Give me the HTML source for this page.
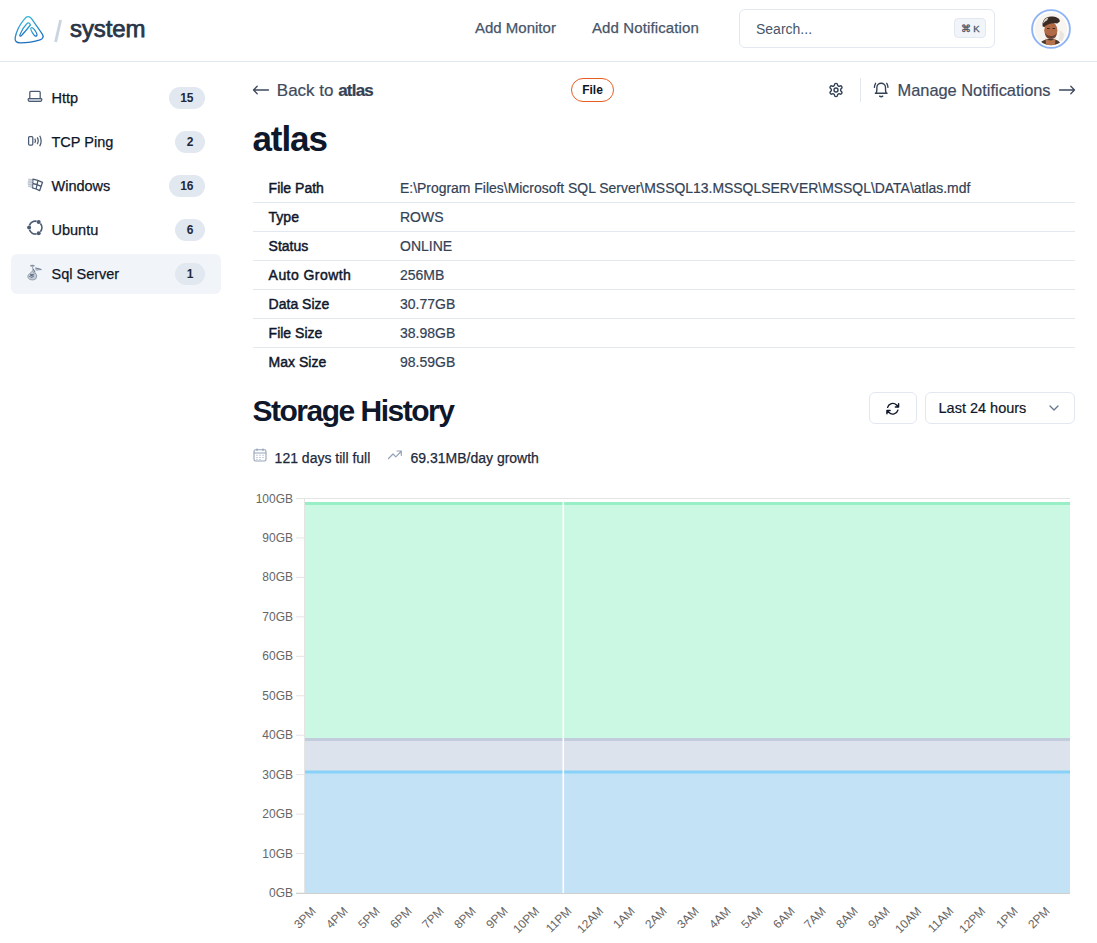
<!DOCTYPE html>
<html><head><meta charset="utf-8">
<style>
*{box-sizing:border-box;margin:0;padding:0}
html,body{width:1097px;height:943px;overflow:hidden;background:#fff;font-family:"Liberation Sans",sans-serif;color:#0f172a}
.abs{position:absolute}
.t{position:absolute;line-height:1;white-space:nowrap}
#hdr{position:absolute;left:0;top:0;width:1097px;height:62px;border-bottom:1px solid #e2e8f0}
.nav{font-size:15px;color:#475569;top:20.4px;-webkit-text-stroke:0.25px #475569}
#search{position:absolute;left:739px;top:9px;width:256px;height:39px;border:1px solid #e2e8f0;border-radius:6px}
#search .ph{left:16px;top:11.7px;font-size:14px;color:#475569}
#search .kbd{position:absolute;left:214px;top:8px;width:32px;height:19.5px;padding-top:0.7px;border:1px solid #e2e8f0;background:#f1f5f9;border-radius:4px;font-size:9.5px;-webkit-text-stroke:0.3px #475569;color:#475569;text-align:center;line-height:18px}
.si{position:absolute;left:11px;width:210px;height:40px;border-radius:6px}
.si.sel{background:#f1f5f9}
.si .lbl{left:40.5px;top:13.1px;font-size:14.5px;color:#0f172a;-webkit-text-stroke:0.25px #0f172a}
.si .bdg{position:absolute;right:16px;top:9px;height:22px;min-width:28px;padding:0 11.5px;border-radius:11px;background:#e2e8f0;font-size:12px;font-weight:bold;color:#1e293b;text-align:center;line-height:22px}
.si svg{position:absolute;left:15px;top:12px}
.tl{font-size:14px;color:#0f172a;left:268.6px;-webkit-text-stroke:0.45px #0f172a}
.tv{font-size:14px;color:#334155;left:400px;-webkit-text-stroke:0.2px #334155}
.rowline{position:absolute;left:253px;width:822px;height:1px;background:#e2e8f0}
.yl{position:absolute;right:804px;font-size:12px;line-height:12px;color:#666;white-space:nowrap;text-align:right}
.xl{position:absolute;font-size:12px;line-height:12px;color:#666;white-space:nowrap;transform-origin:100% 50%;transform:rotate(-45deg)}
</style></head>
<body>
<div id="hdr">
  <svg class="abs" style="left:13px;top:15px" width="32" height="30" viewBox="0 0 32 30">
    <defs><linearGradient id="lg" x1="0" y1="0" x2="0.3" y2="1"><stop offset="0" stop-color="#38bdd8"/><stop offset="1" stop-color="#1d6fc0"/></linearGradient></defs>
    <path d="M11.8 3.6 C13.6 0.9 16.6 0.9 18.5 3.6 L29 18.6 C31 21.4 30.2 23.8 27 24.8 C21 26.8 14 27.8 7.2 27.8 C3.4 27.8 1.6 25.9 2.2 22.6 C3.4 16 6.8 9.4 11.8 3.6 Z" fill="none" stroke="url(#lg)" stroke-width="1.3"/>
    <path d="M8.4 20.6 C7.6 21.6 6.5 21.1 6.9 19.9 C8.4 15.6 11.2 11.2 13.8 8.7 C14.9 7.6 16.2 7.8 16.9 9 L17.4 10 C15 13 11.8 17 8.4 20.6 Z" fill="none" stroke="url(#lg)" stroke-width="1.25"/>
    <ellipse cx="20.9" cy="16.9" rx="1.7" ry="4.9" transform="rotate(-32 20.9 16.9)" fill="none" stroke="url(#lg)" stroke-width="1.25"/>
  </svg>
  <svg class="abs" style="left:50px;top:16px" width="16" height="30" viewBox="0 0 16 30"><line x1="10.6" y1="4" x2="5.6" y2="26" stroke="#cbd5e1" stroke-width="2.9" stroke-linecap="butt"/></svg>
  <div class="t" style="left:70px;top:17.4px;font-size:24px;color:#283548;letter-spacing:-0.1px;-webkit-text-stroke:0.75px #283548">system</div>
  <div class="t nav" style="left:475px">Add Monitor</div>
  <div class="t nav" style="left:592px;letter-spacing:0.12px">Add Notification</div>
  <div id="search"><div class="t ph">Search...</div><div class="kbd">&#8984; K</div></div>
  <svg class="abs" style="left:1030px;top:8px" width="42" height="42" viewBox="0 0 42 42">
    <defs><clipPath id="av"><circle cx="21" cy="21" r="16.2"/></clipPath></defs>
    <circle cx="21" cy="21" r="18.9" fill="#fff" stroke="#8fb4f6" stroke-width="1.9"/>
    <g clip-path="url(#av)">
      <rect x="0" y="0" width="42" height="42" fill="#f8f5f1"/>
      <path d="M30 22 L34 26 L33 34 L29 32 Z" fill="#e9e4dc"/>
      <path d="M8.5 38 C10.5 33 14.5 31 20 31 C25.5 31 29.5 32.5 31.5 37 L31.5 42 L8.5 42 Z" fill="#4a3a32"/>
      <path d="M15.5 30.5 Q20.5 34.5 25.5 30.5 L25 37 L16 37 Z" fill="#b5744f"/>
      <ellipse cx="20.8" cy="22.3" rx="6.6" ry="8.2" fill="#b06a45"/>
      <path d="M14.8 25 C15.5 29.5 18 31.2 21 31.2 C24 31.2 26.5 29.5 27 25 C25 27.5 23 28 21 28 C18.5 28 16.5 27 14.8 25 Z" fill="#5e3a2a" opacity="0.85"/>
      <path d="M17 20.5 h2.6 M22.5 20.5 h2.6" stroke="#3a2620" stroke-width="1"/>
      <path d="M12.6 18.5 C12 12 15.5 8.6 21 8.6 C26.5 8.6 30.2 10.6 29.8 13.6 L27.2 15.6 C23 14.6 17.5 15.2 14.6 19 Z" fill="#3b2b25"/>
      <path d="M13.2 14.5 C13.8 11.5 16 10 18.5 9.6 L17 12.5 C15.5 13 14.2 14 13.6 15.5 Z" fill="#d9cfc4"/>
    </g>
  </svg>
</div>

<!-- sidebar -->
<div class="si" style="top:78px">
  <svg width="16" height="16" viewBox="0 0 16 16" style="left:16px;top:12px"><path d="M2.8 8.6 V2.4 Q2.8 1.4 3.8 1.4 H12.2 Q13.2 1.4 13.2 2.4 V8.6" fill="none" stroke="#4b5b73" stroke-width="1.25"/><path d="M1.6 8.6 H14.4 Q15 8.8 14.8 9.8 Q14.5 11.3 13.4 11.3 H2.6 Q1.5 11.3 1.2 9.8 Q1 8.8 1.6 8.6 Z" fill="#dde3ec" stroke="#4b5b73" stroke-width="1.25"/></svg>
  <div class="t lbl">Http</div><div class="bdg">15</div></div>
<div class="si" style="top:122px">
  <svg width="16" height="16" viewBox="0 0 16 16" style="left:16px;top:11.5px"><rect x="1.6" y="2.5" width="4.2" height="8.6" rx="1" fill="none" stroke="#4b5b73" stroke-width="1.25"/><path d="M7.8 4.6 Q9.2 6.8 7.8 9" fill="none" stroke="#4b5b73" stroke-width="1.25"/><path d="M10.2 3.4 Q12.3 6.8 10.2 10.2" fill="none" stroke="#4b5b73" stroke-width="1.25"/><path d="M12.7 1.8 Q15.6 6.8 12.7 12.2" fill="none" stroke="#4b5b73" stroke-width="1.25"/></svg>
  <div class="t lbl">TCP Ping</div><div class="bdg">2</div></div>
<div class="si" style="top:166px">
  <svg width="18" height="17" viewBox="0 0 18 17" style="left:15px;top:10px"><path d="M6.9 3.1 Q12 4 16.5 6.3 L13.7 14.6 Q10 12.6 6.5 11.8 Z" fill="none" stroke="#4b5b73" stroke-width="1.3" stroke-linejoin="round"/><path d="M11.9 4.6 L10.1 13.2 M6.8 7.5 Q11 8.3 15.2 10.4" stroke="#4b5b73" stroke-width="1.3" fill="none"/><path d="M2.5 2.5 L7 3.3 L6.5 11.8 L2.2 11 Q1 7 2.5 2.5 Z" fill="#8c98ab" opacity="0.55"/><path d="M2 4.5 L6.8 5.4 M1.7 7 L6.7 7.8 M1.8 9.4 L6.6 10.2" stroke="#fff" stroke-width="0.6" opacity="0.7"/></svg>
  <div class="t lbl">Windows</div><div class="bdg">16</div></div>
<div class="si" style="top:210px">
  <svg width="17" height="17" viewBox="0 0 17 17" style="left:15.5px;top:10px"><path d="M2.49 5.41 A6.4 6.4 0 0 1 9.61 1.30 M13.40 3.49 A6.4 6.4 0 0 1 13.40 11.71 M9.61 13.90 A6.4 6.4 0 0 1 2.49 9.79" fill="none" stroke="#4b5b73" stroke-width="1.7"/><circle cx="11.70" cy="2.06" r="2" fill="#4b5b73"/><circle cx="2.10" cy="7.60" r="2" fill="#4b5b73"/><circle cx="11.70" cy="13.14" r="2" fill="#4b5b73"/></svg>
  <div class="t lbl">Ubuntu</div><div class="bdg">6</div></div>
<div class="si sel" style="top:254px">
  <svg width="16" height="17" viewBox="0 0 16 17" style="left:16px;top:10px"><ellipse cx="5.4" cy="1.8" rx="2.4" ry="1" fill="#6b7a90" opacity="0.8"/><path d="M8 3.6 Q12 3.8 15 5.6 Q12.5 7 8.6 6.6 Z" fill="#9aa6b8" opacity="0.75"/><path d="M8.5 4 L14.5 5.6" stroke="#5f6e85" stroke-width="0.8"/><path d="M5.4 3 L6.2 5 Q5.5 7.2 6.6 8.6 Q9.5 9 9.8 12 Q9.8 15.6 6 16 Q2.2 16.2 0.9 13.6 Q0.3 11.2 2.6 9.6 Q4.6 8.4 5.5 6.8" fill="#b4bdcb" opacity="0.75" stroke="#5f6e85" stroke-width="0.8"/><path d="M3 10.8 Q5.5 10 6.5 11.8 Q6 13.6 3.8 13.4 M2.4 12.6 L6.8 10.2 M6.4 5.2 L8.2 8.4" fill="none" stroke="#4b5b73" stroke-width="0.9"/></svg>
  <div class="t lbl">Sql Server</div><div class="bdg">1</div></div>

<!-- top bar main -->
<svg class="abs" style="left:252px;top:82px" width="18" height="16" viewBox="0 0 18 16"><path d="M16.5 8 H1.5 M5.2 4.3 L1.5 8 L5.2 11.7" fill="none" stroke="#3e4a5d" stroke-width="1.3" stroke-linecap="round" stroke-linejoin="round"/></svg>
<div class="t" style="left:276.8px;top:81.5px;font-size:17px;color:#3e4a5d;-webkit-text-stroke:0.2px #3e4a5d">Back to <b style="color:#334155;letter-spacing:-0.8px">atlas</b></div>

<div class="abs" style="left:571px;top:78px;width:43px;height:24px;border:1.4px solid #e95c20;border-radius:12px"></div>
<div class="t" style="left:582.2px;top:83.7px;font-size:12px;font-weight:bold;color:#0f172a">File</div>

<svg class="abs" style="left:828px;top:82px" width="16" height="16" viewBox="0 0 24 24"><path d="M12.22 2h-.44a2 2 0 0 0-2 2v.18a2 2 0 0 1-1 1.73l-.43.25a2 2 0 0 1-2 0l-.15-.08a2 2 0 0 0-2.73.73l-.22.38a2 2 0 0 0 .73 2.730l.15.1a2 2 0 0 1 1 1.72v.51a2 2 0 0 1-1 1.74l-.15.09a2 2 0 0 0-.73 2.73l.22.38a2 2 0 0 0 2.73.73l.15-.08a2 2 0 0 1 2 0l.43.25a2 2 0 0 1 1 1.73V20a2 2 0 0 0 2 2h.44a2 2 0 0 0 2-2v-.18a2 2 0 0 1 1-1.73l.43-.25a2 2 0 0 1 2 0l.15.08a2 2 0 0 0 2.73-.73l.22-.39a2 2 0 0 0-.73-2.73l-.15-.08a2 2 0 0 1-1-1.74v-.5a2 2 0 0 1 1-1.74l.15-.09a2 2 0 0 0 .73-2.73l-.22-.38a2 2 0 0 0-2.73-.73l-.15.08a2 2 0 0 1-2 0l-.43-.25a2 2 0 0 1-1-1.73V4a2 2 0 0 0-2-2z" fill="none" stroke="#334155" stroke-width="2.1"/><circle cx="12" cy="12" r="3" fill="none" stroke="#334155" stroke-width="2.1"/></svg>
<div class="abs" style="left:860px;top:78px;width:1px;height:24px;background:#e2e8f0"></div>
<svg class="abs" style="left:873px;top:82px" width="16.5" height="16.5" viewBox="0 0 24 24"><path d="M4.6 16.4 Q5.6 14 5.6 11 V8.2 A6.3 6.3 0 0 1 18.2 8.2 V11 Q18.2 14 19.2 16.4" fill="none" stroke="#334155" stroke-width="2" stroke-linejoin="round"/><path d="M3.4 16.4 H20.4" stroke="#334155" stroke-width="2.1" stroke-linecap="round"/><path d="M9.6 20.6 Q11.9 22.2 14.2 20.6" fill="none" stroke="#334155" stroke-width="2" stroke-linecap="round"/><path d="M3.8 1.9 Q2.1 4.6 2 7.8 M20 1.9 Q21.7 4.6 21.8 7.8" fill="none" stroke="#334155" stroke-width="1.9" stroke-linecap="round"/></svg>
<div class="t" style="left:897.5px;top:82.2px;font-size:16.4px;color:#3e4a5d;-webkit-text-stroke:0.2px #3e4a5d">Manage Notifications</div>
<svg class="abs" style="left:1058px;top:82px" width="18" height="16" viewBox="0 0 18 16"><path d="M1.5 8 H16.5 M12.8 4.3 L16.5 8 L12.8 11.7" fill="none" stroke="#3e4a5d" stroke-width="1.3" stroke-linecap="round" stroke-linejoin="round"/></svg>

<div class="t" style="left:252.5px;top:121.2px;font-size:35px;font-weight:bold;color:#0f172a;letter-spacing:-1.1px">atlas</div>

<!-- table -->
<div class="t tl" style="top:180.85px">File Path</div><div class="t tv" style="top:181.5px;font-size:13.95px">E:\Program Files\Microsoft SQL Server\MSSQL13.MSSQLSERVER\MSSQL\DATA\atlas.mdf</div>
<div class="rowline" style="top:202px"></div>
<div class="t tl" style="top:209.85px">Type</div><div class="t tv" style="top:209.8px">ROWS</div>
<div class="rowline" style="top:231px"></div>
<div class="t tl" style="top:238.85px">Status</div><div class="t tv" style="top:238.8px">ONLINE</div>
<div class="rowline" style="top:260px"></div>
<div class="t tl" style="top:267.85px;letter-spacing:0.45px">Auto Growth</div><div class="t tv" style="top:267.8px">256MB</div>
<div class="rowline" style="top:289px"></div>
<div class="t tl" style="top:296.85px">Data Size</div><div class="t tv" style="top:296.8px">30.77GB</div>
<div class="rowline" style="top:318px"></div>
<div class="t tl" style="top:325.85px">File Size</div><div class="t tv" style="top:325.8px">38.98GB</div>
<div class="rowline" style="top:347px"></div>
<div class="t tl" style="top:354.85px">Max Size</div><div class="t tv" style="top:354.8px">98.59GB</div>

<!-- storage history -->
<div class="t" style="left:252.5px;top:395.5px;font-size:30px;font-weight:bold;color:#0f172a;letter-spacing:-1.5px">Storage History</div>
<div class="abs" style="left:869px;top:392px;width:48px;height:32px;border:1px solid #e2e8f0;border-radius:6px"></div>
<svg class="abs" style="left:885px;top:400.5px" width="15.5" height="15.5" viewBox="0 0 24 24"><path d="M16.023 9.348h4.992v-.001M2.985 19.644v-4.992m0 0h4.992m-4.993 0 3.181 3.183a8.25 8.25 0 0 0 13.803-3.7M4.031 9.865a8.25 8.25 0 0 1 13.803-3.7l3.181 3.182m0-4.991v4.99" fill="none" stroke="#0f172a" stroke-width="2.2" stroke-linecap="round" stroke-linejoin="round"/></svg>
<div class="abs" style="left:925px;top:392px;width:150px;height:32px;border:1px solid #e2e8f0;border-radius:6px"></div>
<div class="t" style="left:938.5px;top:401.3px;font-size:14.5px;color:#0f172a;-webkit-text-stroke:0.2px #0f172a">Last 24 hours</div>
<svg class="abs" style="left:1046px;top:400px" width="16" height="16" viewBox="0 0 16 16"><path d="M4 6 L8 10 L12 6" fill="none" stroke="#64748b" stroke-width="1.3" stroke-linecap="round" stroke-linejoin="round"/></svg>

<svg class="abs" style="left:252px;top:447px" width="16" height="16" viewBox="0 0 16 16"><rect x="2" y="2.8" width="12" height="11.2" rx="1.6" fill="none" stroke="#94a3b8" stroke-width="1.1"/><path d="M2 6 H14 M5 1.5 V4 M11 1.5 V4" stroke="#94a3b8" stroke-width="1.1"/><path d="M4.5 8.3h1M7.5 8.3h1M10.5 8.3h1M4.5 10.5h1M7.5 10.5h1M10.5 10.5h1M4.5 12.4h1M7.5 12.4h1" stroke="#94a3b8" stroke-width="1"/></svg>
<div class="t" style="left:274.6px;top:451px;font-size:14px;color:#1e293b;-webkit-text-stroke:0.25px #1e293b">121 days till full</div>
<svg class="abs" style="left:387px;top:448px" width="16" height="14" viewBox="0 0 16 14"><path d="M1.5 10.5 L6 6 L8.8 8.8 L14 3.5 M10 3 H14.3 V7.3" fill="none" stroke="#94a3b8" stroke-width="1.2" stroke-linecap="round" stroke-linejoin="round"/></svg>
<div class="t" style="left:410.5px;top:451px;font-size:14px;color:#1e293b;-webkit-text-stroke:0.25px #1e293b">69.31MB/day growth</div>

<!-- chart -->
<svg class="abs" style="left:0;top:0" width="1097" height="943" viewBox="0 0 1097 943">
  <line x1="296" y1="498.5" x2="1070" y2="498.5" stroke="#e4e4e4" stroke-width="1"/>
  <line x1="296" y1="537.95" x2="304" y2="537.95" stroke="#e4e4e4" stroke-width="1"/>
  <line x1="296" y1="577.40" x2="304" y2="577.40" stroke="#e4e4e4" stroke-width="1"/>
  <line x1="296" y1="616.85" x2="304" y2="616.85" stroke="#e4e4e4" stroke-width="1"/>
  <line x1="296" y1="656.30" x2="304" y2="656.30" stroke="#e4e4e4" stroke-width="1"/>
  <line x1="296" y1="695.75" x2="304" y2="695.75" stroke="#e4e4e4" stroke-width="1"/>
  <line x1="296" y1="735.20" x2="304" y2="735.20" stroke="#e4e4e4" stroke-width="1"/>
  <line x1="296" y1="774.65" x2="304" y2="774.65" stroke="#e4e4e4" stroke-width="1"/>
  <line x1="296" y1="814.10" x2="304" y2="814.10" stroke="#e4e4e4" stroke-width="1"/>
  <line x1="296" y1="853.55" x2="304" y2="853.55" stroke="#e4e4e4" stroke-width="1"/>
  <line x1="296" y1="893.00" x2="304" y2="893.00" stroke="#e4e4e4" stroke-width="1"/>
  <rect x="305" y="504" width="765" height="389" fill="#cbf8e2"/>
  <rect x="305" y="739.5" width="765" height="153.5" fill="#dde3ec"/>
  <rect x="305" y="772" width="765" height="121" fill="#c4e2f6"/>
  <line x1="305" y1="503.5" x2="1070" y2="503.5" stroke="#98efc5" stroke-width="3"/>
  <line x1="305" y1="739.5" x2="1070" y2="739.5" stroke="#c3ccdc" stroke-width="3"/>
  <line x1="305" y1="772" x2="1070" y2="772" stroke="#88d1f8" stroke-width="3"/>
  <line x1="304.5" y1="498" x2="304.5" y2="893" stroke="#e4e4e4" stroke-width="1"/>
  <line x1="296" y1="893.5" x2="1070" y2="893.5" stroke="#d0d0d0" stroke-width="1"/>
  <line x1="563.3" y1="501" x2="563.3" y2="893" stroke="#ffffff" stroke-width="1.6"/>
</svg>
<div class="yl" style="top:492.54px">100GB</div>
<div class="yl" style="top:531.99px">90GB</div>
<div class="yl" style="top:571.44px">80GB</div>
<div class="yl" style="top:610.89px">70GB</div>
<div class="yl" style="top:650.34px">60GB</div>
<div class="yl" style="top:689.79px">50GB</div>
<div class="yl" style="top:729.24px">40GB</div>
<div class="yl" style="top:768.69px">30GB</div>
<div class="yl" style="top:808.14px">20GB</div>
<div class="yl" style="top:847.59px">10GB</div>
<div class="yl" style="top:887.04px">0GB</div>
<div id="xls"><div class="xl" style="right:783.00px;top:902.5px">3PM</div><div class="xl" style="right:751.12px;top:902.5px">4PM</div><div class="xl" style="right:719.24px;top:902.5px">5PM</div><div class="xl" style="right:687.36px;top:902.5px">6PM</div><div class="xl" style="right:655.48px;top:902.5px">7PM</div><div class="xl" style="right:623.60px;top:902.5px">8PM</div><div class="xl" style="right:591.72px;top:902.5px">9PM</div><div class="xl" style="right:559.84px;top:902.5px">10PM</div><div class="xl" style="right:527.96px;top:902.5px">11PM</div><div class="xl" style="right:496.08px;top:902.5px">12AM</div><div class="xl" style="right:464.20px;top:902.5px">1AM</div><div class="xl" style="right:432.32px;top:902.5px">2AM</div><div class="xl" style="right:400.44px;top:902.5px">3AM</div><div class="xl" style="right:368.56px;top:902.5px">4AM</div><div class="xl" style="right:336.68px;top:902.5px">5AM</div><div class="xl" style="right:304.80px;top:902.5px">6AM</div><div class="xl" style="right:272.92px;top:902.5px">7AM</div><div class="xl" style="right:241.04px;top:902.5px">8AM</div><div class="xl" style="right:209.16px;top:902.5px">9AM</div><div class="xl" style="right:177.28px;top:902.5px">10AM</div><div class="xl" style="right:145.40px;top:902.5px">11AM</div><div class="xl" style="right:113.52px;top:902.5px">12PM</div><div class="xl" style="right:81.64px;top:902.5px">1PM</div><div class="xl" style="right:49.76px;top:902.5px">2PM</div></div>
</body></html>
